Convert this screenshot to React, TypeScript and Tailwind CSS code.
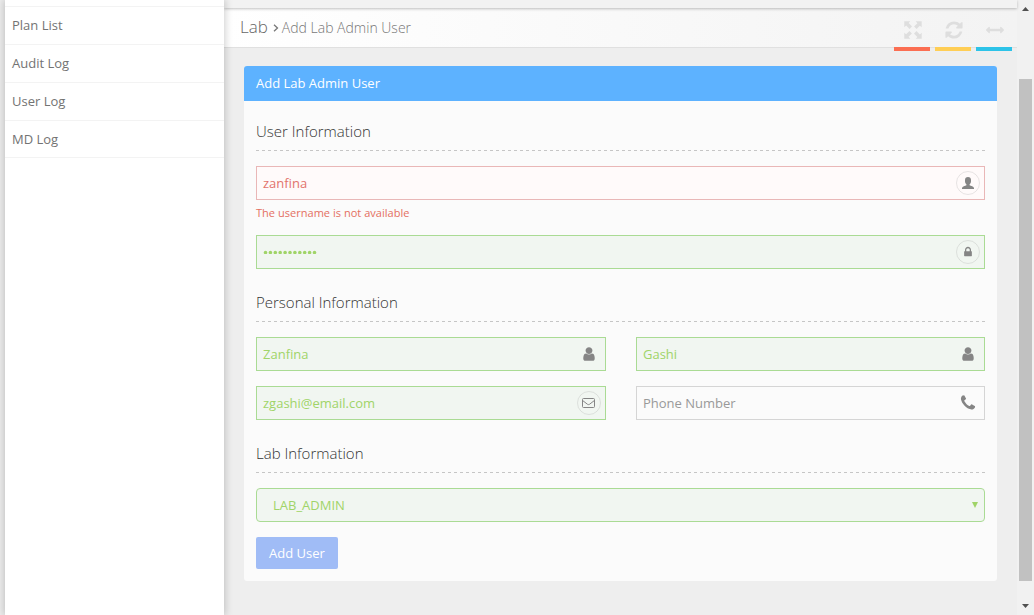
import React from "react";

const USER = "M1536 1399q0 109-62.5 187t-150.5 78h-854q-88 0-150.5-78t-62.5-187q0-85 8.5-160.5t31.5-152 58.5-131 94-89 134.5-34.5q131 128 313 128t313-128q76 0 134.5 34.5t94 89 58.5 131 31.5 152 8.5 160.5zm-256-887q0 159-112.5 271.5t-271.5 112.5-271.5-112.5-112.5-271.5 112.5-271.5 271.5-112.5 271.5 112.5 112.5 271.5z";
const LOCK = "M640 768h512v-192q0-106-75-181t-181-75-181 75-75 181v192zm832 96v576q0 40-28 68t-68 28h-960q-40 0-68-28t-28-68v-576q0-40 28-68t68-28h32v-192q0-184 132-316t316-132 316 132 132 316v192h32q40 0 68 28t28 68z";
const PHONE = "M1600 1240q0 27-10 70.5t-21 68.5q-21 50-122 106-94 51-186 51-27 0-52.5-3.5t-57.5-12.5-47.5-14.5-55.5-20.5-49-18q-98-35-175-83-128-79-264.5-215.5t-215.5-264.5q-48-77-83-175-3-9-18-49t-20.5-55.5-14.5-47.5-12.5-57.5-3.5-52.5q0-92 51-186 56-101 106-122 25-11 68.5-21t70.5-10q14 0 21 3 18 6 53 76 11 19 30 54t35 63.5 31 53.5q3 4 17.5 25t21.5 35.5 7 28.5q0 20-28.5 50t-62 55-62 53-28.5 46q0 9 5 22.5t8.5 20.5 14 24 11.5 19q76 137 174 235t235 174q2 1 19 11.5t24 14 20.5 8.5 22.5 5q18 0 46-28.5t53-62 55-62 50-28.5q14 0 28.5 7t35.5 21.5 25 17.5q25 15 53.5 31t63.5 35 54 30q70 35 76 53 3 7 3 21z";
const REFRESH = "M1639 1056q0 5-1 7-64 268-268 434.5t-478 166.5q-146 0-282.5-55t-243.5-157l-129 129q-19 19-45 19t-45-19-19-45v-448q0-26 19-45t45-19h448q26 0 45 19t19 45-19 45l-137 137q71 66 161 102t187 36q134 0 250-65t186-179q11-17 53-117 8-23 30-23h192q13 0 22.5 9.5t9.5 22.5zm25-800v448q0 26-19 45t-45 19h-448q-26 0-45-19t-19-45 19-45l138-138q-148-137-349-137-134 0-250 65t-186 179q-11 17-53 117-8 23-30 23h-199q-13 0-22.5-9.5t-9.5-22.5v-7q65-268 270-434.5t480-166.5q146 0 284 55.5t245 156.5l130-129q19-19 45-19t45 19 19 45z";
const ARROWS_H = "M1792 896q0 26-19 45l-256 256q-19 19-45 19t-45-19-19-45v-128h-1024v128q0 26-19 45t-45 19-45-19l-256-256q-19-19-19-45t19-45l256-256q19-19 45-19t45 19 19 45v128h1024v-128q0-26 19-45t45-19 45 19l256 256q19 19 19 45z";

function Glyph({ d, className }: { d: string; className: string }) {
  return (
    <svg viewBox="0 0 1792 1792" fill="currentColor" className={className}>
      <path d={d} />
    </svg>
  );
}

function Expand() {
  return (
    <svg viewBox="0 0 18 18" fill="currentColor" className="size-[18px]">
      {[0, 90, 180, 270].map((r) => (
        <path key={r} transform={`rotate(${r} 9 9)`} d="M0.3 0.3H6.300L4.700 2.100L8 5.400L5.500 7.900L2.200 4.600L0.300 6.300Z" />
      ))}
    </svg>
  );
}

function Bust() {
  return (
    <svg viewBox="0 0 12 12" fill="currentColor" className="size-3">
      <path d="M6 0C7.900 0 9 1.100 9 3v1.300c0 1.300-.6 2.400-1.400 3v1c1.200.7 4.200 1.300 4.400 2.700v1H0v-1c.2-1.400 3.200-2 4.400-2.700v-1C3.600 6.700 3 5.600 3 4.300V3C3 1.100 4.100 0 6 0Z" />
    </svg>
  );
}

function Mail() {
  return (
    <svg viewBox="0 0 13 10" fill="none" stroke="currentColor" className="mr-px h-[10px] w-[13px]">
      <rect x=".5" y=".5" width="12" height="9" rx="1" />
      <path d="M1 2.800L5.500 6.300q1 .6 2 0L12 2.800" />
    </svg>
  );
}

function Ring({ children }: { children: React.ReactNode }) {
  return <span className="-mr-[6px] flex size-6 items-center justify-center rounded-full border border-[#888]/20">{children}</span>;
}

function Section({ title }: { title: string }) {
  return (
    <div>
      <h3 className="h-[34px] pt-[5px] text-[15px] leading-[20px] font-light text-[#333]">{title}</h3>
      <svg className="block h-px w-full">
        <line x1="0" y1=".5" x2="729" y2=".5" stroke="#c6c6c6" strokeDasharray="3 3" />
      </svg>
    </div>
  );
}

const green = "border-[#aadb94] bg-[#f1f6f1] text-[#a0d468]";

function Field({ tone, value, children }: { tone: string; value: string; children: React.ReactNode }) {
  return (
    <div className={`flex h-[34px] items-center justify-between border pr-[10px] pl-[6px] ${tone}`}>
      <span>{value}</span>
      <span className="text-[#858585]">{children}</span>
    </div>
  );
}

function Tool({ bar, children }: { bar: string; children: React.ReactNode }) {
  return (
    <div className={`flex h-[42px] w-9 items-center justify-center border-b-4 pt-[3px] pl-px text-[#dedede] ${bar}`}>{children}</div>
  );
}

export default function App() {
  return (
    <div className="flex h-[615px] w-[1034px] overflow-hidden bg-[#eee] pl-[5px] font-['Open_Sans',sans-serif] text-[13px] leading-[18px] text-[#777]">
      <nav className="relative z-10 flex w-[219px] shrink-0 flex-col bg-white shadow-[0_0_8px_1px_rgba(0,0,0,0.2)]">
        <div className="h-[7px] shrink-0 border-b border-[#f3f3f3]" />
        {["Plan List", "Audit Log", "User Log", "MD Log"].map((item) => (
          <a key={item} className="h-[38px] border-b border-[#f3f3f3] pt-[9px] pl-[7px] text-[#737373] last:h-[37px]">
            {item}
          </a>
        ))}
      </nav>

      <main className="flex w-[793px] shrink-0 flex-col">
        <div className="z-[1] h-2 shrink-0 bg-[#f2f2f2] shadow-[0_1px_3px_rgba(0,0,0,0.25)]" />
        <header className="flex h-10 shrink-0 justify-between border-b border-[#e0e0e0] bg-linear-to-r from-white to-[#f3f3f3] pr-[5px] pl-4">
          <div className="flex h-[38px] items-center">
            <span className="text-[17px] font-light text-[#666]">Lab</span>
            <svg viewBox="0 0 6 8" className="mt-[2px] mr-[3px] ml-[5px] h-2 w-1.5" fill="none" stroke="#777" strokeWidth="1.300">
              <path d="M1 .7L4.500 4L1 7.300" />
            </svg>
            <span className="pt-[2px] text-[14px] font-light text-[#777]">Add Lab Admin User</span>
          </div>
          <div className="flex h-[43px] gap-[5px] pt-px">
            <Tool bar="border-[#fb6e52]"><Expand /></Tool>
            <Tool bar="border-[#ffce55]"><Glyph d={REFRESH} className="size-5" /></Tool>
            <Tool bar="border-[#2dc3e8]"><Glyph d={ARROWS_H} className="size-[18px]" /></Tool>
          </div>
        </header>

        <section className="mt-[18px] ml-5 h-[515px] w-[753px] rounded-[3px] bg-[#fbfbfb]">
          <h2 className="h-[35px] rounded-t-[3px] bg-[#5db2ff] px-3 pt-2 text-[13px] font-medium text-white">Add Lab Admin User</h2>
          <div className="px-3 pt-[15px]">
            <Section title="User Information" />
            <div className="mt-[15px]">
              <Field tone="border-[#e9b7b7] bg-[#fffafa] text-[#e2736c]" value="zanfina"><Ring><Bust /></Ring></Field>
              <p className="mt-1 h-[18px] text-[11px] tracking-[0.03px] text-[#e46f61]">The username is not available</p>
            </div>
            <div className="mt-[13px] flex h-[34px] items-center justify-between border border-[#aadb94] bg-[#f1f6f1] pr-[10px] pl-[6px]">
              <svg viewBox="0 0 55 4" className="h-1 w-[55px] fill-[#a0d468]">
                {Array.from({ length: 11 }, (_, i) => <circle key={i} cx={2.5 + i * 4.9} cy="2.500" r="1.750" />)}
              </svg>
              <span className="text-[#858585]"><Ring><Glyph d={LOCK} className="size-3" /></Ring></span>
            </div>
            <div className="mt-[18px]"><Section title="Personal Information" /></div>
            <div className="mt-[15px] grid grid-cols-[350px_349px] gap-x-[30px] gap-y-[15px]">
              <Field tone={green} value="Zanfina"><Glyph d={USER} className="-mr-0.5 size-4" /></Field>
              <Field tone={green} value="Gashi"><Glyph d={USER} className="-mr-0.5 size-4" /></Field>
              <Field tone={green} value="zgashi@email.com"><Ring><Mail /></Ring></Field>
              <Field tone="border-[#d5d5d5] bg-[#fbfbfb] text-[#999]" value="Phone Number"><Glyph d={PHONE} className="-mr-[3px] size-[18px]" /></Field>
            </div>
            <div className="mt-[18px]"><Section title="Lab Information" /></div>
            <div className="mt-[15px] flex h-[34px] items-center justify-between rounded border border-[#aadb94] bg-[#f1f6f1] pr-[6px] pl-4 text-[#a0d468]">
              <span>LAB_ADMIN</span>
              <svg viewBox="0 0 6 6" className="h-1.5 w-1.5 fill-[#a0d468]"><path d="M0 0H6L3 6Z" /></svg>
            </div>
            <button className="mt-[15px] h-8 w-[82px] rounded-[2px] bg-[#a0bcf6] text-[13px] font-medium text-white">Add User</button>
          </div>
        </section>
      </main>

      <aside className="flex w-[17px] shrink-0 flex-col items-center bg-[#f1f1f1]">
        <svg viewBox="0 0 7 4" className="mt-[7px] h-1 w-[7px] fill-[#505050]"><path d="M0 4L3.500 0L7 4Z" /></svg>
        <div className="mt-[68px] mr-px h-[502px] w-[13px] shrink-0 bg-[#c1c1c1]" />
        <svg viewBox="0 0 7 4" className="mt-[23px] h-1 w-[7px] shrink-0 fill-[#505050]"><path d="M0 0H7L3.500 4Z" /></svg>
      </aside>
    </div>
  );
}
